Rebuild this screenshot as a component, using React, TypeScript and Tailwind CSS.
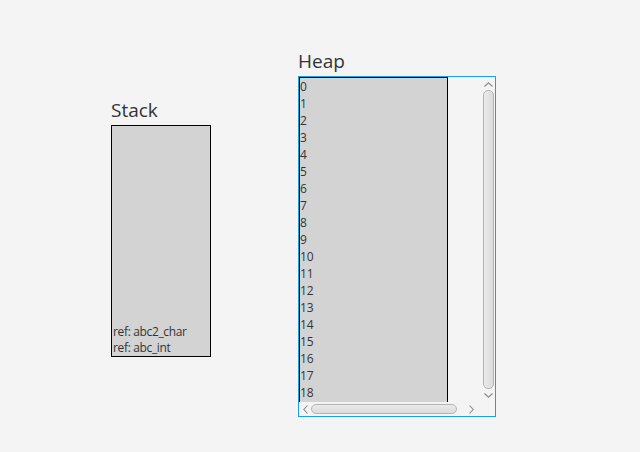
import React from "react";

const heapRows = Array.from({ length: 19 }, (_, i) => i);

function ChevronUp() {
  return (
    <svg width="9" height="5" viewBox="0 0 9 5" className="block">
      <path d="M0.5 4.5 L4.5 0.8 L8.5 4.5" fill="none" stroke="#8a8a8a" strokeWidth="1.1" />
    </svg>
  );
}

function ChevronDown() {
  return (
    <svg width="9" height="5" viewBox="0 0 9 5" className="block">
      <path d="M0.5 0.5 L4.5 4.2 L8.5 0.5" fill="none" stroke="#8a8a8a" strokeWidth="1.1" />
    </svg>
  );
}

function ChevronLeft() {
  return (
    <svg width="5" height="9" viewBox="0 0 5 9" className="block">
      <path d="M4.5 0.5 L0.8 4.5 L4.5 8.5" fill="none" stroke="#8a8a8a" strokeWidth="1.1" />
    </svg>
  );
}

function ChevronRight() {
  return (
    <svg width="5" height="9" viewBox="0 0 5 9" className="block">
      <path d="M0.5 0.5 L4.2 4.5 L0.5 8.5" fill="none" stroke="#8a8a8a" strokeWidth="1.1" />
    </svg>
  );
}

export default function App(): React.JSX.Element {
  return (
    <div
      className="w-[640px] h-[452px] bg-[#f4f4f4] flex items-start text-[#333333]"
      style={{ fontFamily: '"Open Sans", "Noto Sans", sans-serif' }}
    >
      {/* Stack column */}
      <div className="ml-[111px] mt-[97px] flex flex-col">
        <div className="text-[19px] leading-[26px] h-[28px] text-[#333333]">Stack</div>
        <div className="w-[100px] h-[232px] border border-black bg-[#d3d3d3] flex flex-col justify-end">
          <div className="text-[12px] leading-[16px] pl-[1px] tracking-[-0.35px]">ref: abc2_char</div>
          <div className="text-[12px] leading-[16px] pl-[1px] tracking-[-0.35px]">ref: abc_int</div>
        </div>
      </div>

      {/* Heap column */}
      <div className="ml-[87px] mt-[48px] flex flex-col">
        <div className="text-[19px] leading-[26px] h-[28px] text-[#333333]">Heap</div>
        <div className="w-[198px] h-[341px] border border-[#1ea0d8] bg-[#f4f4f4] grid grid-cols-[1fr_14px] grid-rows-[1fr_14px]">
          {/* viewport */}
          <div className="overflow-hidden flex">
            <div className="w-[149px] border border-b-0 border-black bg-[#d3d3d3]">
              {heapRows.map((n) => (
                <div key={n} className="text-[12px] leading-[17px] h-[17px]">
                  {n}
                </div>
              ))}
            </div>
          </div>

          {/* vertical scrollbar */}
          <div className="flex flex-col items-center bg-[#f4f4f4]">
            <div className="h-[12px] flex items-center justify-center pt-[2px]">
              <ChevronUp />
            </div>
            <div className="flex-1 w-[11px] my-[1px] rounded-[5px] border border-[#b4b4b4] bg-gradient-to-r from-[#eaeaea] to-[#dcdcdc]" />
            <div className="h-[12px] flex items-center justify-center pb-[1px]">
              <ChevronDown />
            </div>
          </div>

          {/* horizontal scrollbar */}
          <div className="flex items-center bg-[#f4f4f4]">
            <div className="w-[12px] flex items-center justify-center pl-[1px]">
              <ChevronLeft />
            </div>
            <div className="w-[146px] h-[10px] rounded-[5px] border border-[#b4b4b4] bg-gradient-to-b from-[#eaeaea] to-[#dcdcdc]" />
            <div className="flex-1 flex items-center justify-center pl-[4px]">
              <ChevronRight />
            </div>
          </div>

          {/* corner */}
          <div className="bg-[#f4f4f4]" />
        </div>
      </div>
    </div>
  );
}
